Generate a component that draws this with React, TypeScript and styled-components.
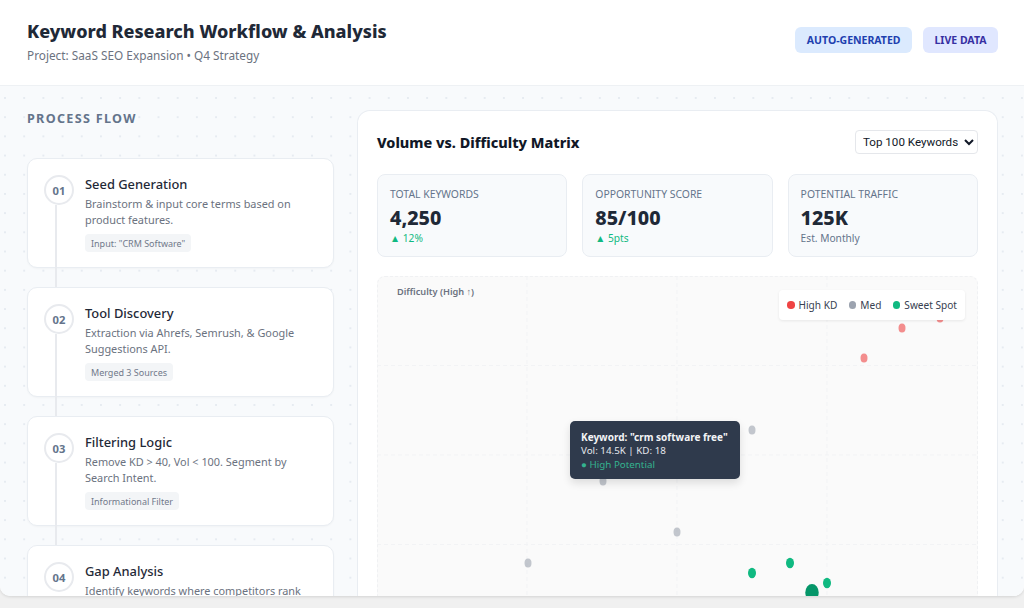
import React from 'react';
import styled, { createGlobalStyle } from 'styled-components';

const Global = createGlobalStyle`
  html, body { margin: 0; padding: 0; height: 608px; background: #f0f0f0; overflow: hidden; }
  * { box-sizing: border-box; }
  body { font-family: "Noto Sans", "Open Sans", sans-serif; }
`;

const Slide = styled.div`
  width: 1024px; height: 596px; background: #ffffff; display: flex; flex-direction: column;
  overflow: hidden; border-radius: 0 0 10px 10px; box-shadow: 0 1px 3px rgba(0,0,0,.12);
`;
const Header = styled.header`
  height: 86px; flex: none; display: flex; justify-content: space-between; align-items: flex-start;
  padding: 19px 26px 0 27px; border-bottom: 1px solid #eef1f4; background: #fff;
`;
const TitleBlock = styled.div`display: flex; flex-direction: column;`;
const Title = styled.h1`
  margin: 0; font-size: 18px; line-height: 24px; font-weight: 800; color: #1f2937;
`;
const Subtitle = styled.p`
  margin: 4px 0 0; font-size: 11.8px; line-height: 16px; color: #6b7280;
`;
const Badges = styled.div`display: flex; gap: 11px; margin-top: 8px;`;
const Badge = styled.span<{ $bg: string; $fg: string }>`
  height: 26px; padding: 0 11.5px; display: flex; align-items: center; border-radius: 6px;
  font-size: 10.5px; font-weight: 700; background: ${p => p.$bg}; color: ${p => p.$fg};
`;
const Main = styled.main`
  flex: 1; min-height: 0; display: flex; background-color: #f8fafc;
  background-image: radial-gradient(#e6ebf1 0.8px, transparent 0.9px);
  background-size: 19.2px 19.2px; background-position: -4.6px 2.4px;
`;
const Flow = styled.section`
  width: 357px; flex: none; padding: 24px 23px 0 27px; overflow: hidden;
`;
const FlowTitle = styled.h2`
  margin: 0 0 31px; font-size: 12.6px; line-height: 17px; font-weight: 700; letter-spacing: 1.3px; color: #64748b;
`;
const Steps = styled.div`display: flex; flex-direction: column; gap: 19.5px;`;
const Step = styled.article`
  position: relative; height: 109.5px; display: flex; gap: 11px; padding: 16px 16px 0 16px;
  background: #fff; border: 1px solid #e9edf2; border-radius: 10px; box-shadow: 0 1px 2px rgba(0,0,0,.03);
`;
const Connector = styled.span`
  position: absolute; left: 27px; top: 46px; width: 2px; height: 92px; background: #e8eaee;
`;
const Circle = styled.div`
  position: relative; z-index: 1; width: 30px; height: 30px; flex: none; border-radius: 50%; background: #fff;
  border: 2px solid #e8eaee; display: flex; align-items: center; justify-content: center;
  font-size: 11.2px; font-weight: 700; color: #64748b;
`;
const StepBody = styled.div`display: flex; flex-direction: column; align-items: flex-start; min-width: 0;`;
const StepTitle = styled.h3`
  margin: -0.5px 0 0; font-size: 12.9px; line-height: 18px; font-weight: 500; color: #1f2937;
`;
const StepText = styled.p`
  margin: 3.5px 0 0; font-size: 10.9px; line-height: 16px; color: #6b7280;
`;
const Tag = styled.span`
  margin-top: 6px; height: 18px; padding: 0 6px; display: flex; align-items: center; border-radius: 4px;
  background: #f3f5f7; font-size: 9px; color: #71798a;
`;
const Panel = styled.section`
  width: 641px; flex: none; background: #fff; border: 1px solid #e9edf2; border-bottom: none;
  border-radius: 13px 13px 0 0; margin-top: 24px; padding: 19px 19px 0; overflow: hidden;
`;
const PanelHead = styled.div`display: flex; justify-content: space-between; align-items: center; height: 24px;`;
const PanelTitle = styled.h2`margin: 0; font-size: 14.4px; line-height: 23px; font-weight: 800; color: #111827;`;
const Select = styled.select`
  width: 123px; height: 24px; padding: 0 3px; background: #fff; border: 1px solid #e5e7eb; border-radius: 4px;
  font-family: Roboto, "Liberation Sans", sans-serif; font-size: 11.6px; color: #111827;
`;
const Stats = styled.div`
  display: grid; grid-template-columns: 190.3px 190.3px 190.4px; gap: 15px; margin-top: 20px;
`;
const Stat = styled.div`
  height: 83px; padding: 12px 12px 0; background: #f8fafc; border: 1px solid #e9edf2; border-radius: 8px;
`;
const StatLabel = styled.div`font-size: 10.4px; line-height: 14px; color: #64748b;`;
const StatValue = styled.div`margin-top: 4px; font-size: 19.7px; line-height: 25px; font-weight: 800; color: #1f2937;`;
const StatNote = styled.div<{ $up?: boolean }>`
  margin-top: 1px; font-size: 10.2px; line-height: 14px; color: ${p => (p.$up ? '#10b981' : '#64748b')};
`;
const Chart = styled.div`
  position: relative; width: 601px; height: 360px; margin-top: 19px; background: #fafafa;
  border: 1px dashed #f0f1f3; border-bottom: none; border-radius: 8px 8px 0 0;
`;
const Plot = styled.svg`position: absolute; left: -1px; top: -1px; width: 601px; height: 360px;`;
const AxisLabel = styled.span`
  position: absolute; left: 19px; top: 9px; font-size: 9.2px; line-height: 12px; font-weight: 600; color: #6b7280;
`;
const Legend = styled.div`
  position: absolute; right: 12px; top: 13px; height: 30px; padding: 0 8px; display: flex; align-items: center; gap: 11.5px;
  background: #fff; border-radius: 4px; box-shadow: 0 1px 3px rgba(0,0,0,.08);
  font-size: 10.1px; color: #374151;
`;
const LegendItem = styled.span`display: flex; align-items: center; gap: 4px;`;
const Swatch = styled.i<{ $c: string }>`width: 7.5px; height: 7.5px; border-radius: 50%; background: ${p => p.$c};`;
const Tooltip = styled.div`
  position: absolute; left: 192px; top: 144px; width: 170px; height: 58px; padding: 9px 0 9px 11px;
  background: #2f3a4c; border-radius: 5px; box-shadow: 0 4px 8px rgba(0,0,0,.12);
  font-size: 9.8px; line-height: 14.2px; color: #e5e7eb; white-space: nowrap;
`;
const TipHead = styled.div`font-size: 10px; font-weight: 700; color: #f3f4f6;`;
const TipGood = styled.div`color: #34b38f;`;

const steps = [
  { n: '01', t: 'Seed Generation', d: 'Brainstorm & input core terms based on product features.', g: 'Input: "CRM Software"' },
  { n: '02', t: 'Tool Discovery', d: 'Extraction via Ahrefs, Semrush, & Google Suggestions API.', g: 'Merged 3 Sources' },
  { n: '03', t: 'Filtering Logic', d: 'Remove KD > 40, Vol < 100. Segment by Search Intent.', g: 'Informational Filter' },
  { n: '04', t: 'Gap Analysis', d: 'Identify keywords where competitors rank but we do not appear yet.', g: 'Content Gaps' },
];
const vLines = [150, 300, 450];
const hLines = [89.5, 179, 268.5];
const dots: [number, number, number, number, string, number][] = [
  [487, 82, 3.5, 4.5, '#ef4444', 0.6], [525, 52, 3.5, 4.5, '#ef4444', 0.6], [563, 42, 3.5, 4.5, '#ef4444', 0.6],
  [375, 154, 3.5, 4.5, '#9ca3af', 0.6], [226, 205, 3.5, 4.5, '#9ca3af', 0.6], [300, 256, 3.5, 4.5, '#9ca3af', 0.6], [151, 287, 3.5, 4.5, '#9ca3af', 0.6],
  [375, 297, 4, 5.2, '#10b981', 1], [413, 287, 4, 5.2, '#10b981', 1], [450, 307, 4, 5.2, '#10b981', 1], [435, 316.5, 6.7, 8.5, '#059669', 1],
];

export default function App() {
  return (
    <>
      <Global />
      <Slide>
        <Header>
          <TitleBlock>
            <Title>Keyword Research Workflow &amp; Analysis</Title>
            <Subtitle>Project: SaaS SEO Expansion • Q4 Strategy</Subtitle>
          </TitleBlock>
          <Badges>
            <Badge $bg="#dbeafe" $fg="#1e40af">AUTO-GENERATED</Badge>
            <Badge $bg="#e0e7ff" $fg="#3730a3">LIVE DATA</Badge>
          </Badges>
        </Header>
        <Main>
          <Flow>
            <FlowTitle>PROCESS FLOW</FlowTitle>
            <Steps>
              {steps.map((s, i) => (
                <Step key={s.n}>
                  {i < 3 && <Connector />}
                  <Circle>{s.n}</Circle>
                  <StepBody>
                    <StepTitle>{s.t}</StepTitle>
                    <StepText>{s.d}</StepText>
                    <Tag>{s.g}</Tag>
                  </StepBody>
                </Step>
              ))}
            </Steps>
          </Flow>
          <Panel>
            <PanelHead>
              <PanelTitle>Volume vs. Difficulty Matrix</PanelTitle>
              <Select defaultValue="100"><option value="100">Top 100 Keywords</option></Select>
            </PanelHead>
            <Stats>
              <Stat><StatLabel>TOTAL KEYWORDS</StatLabel><StatValue>4,250</StatValue><StatNote $up>▲ 12%</StatNote></Stat>
              <Stat><StatLabel>OPPORTUNITY SCORE</StatLabel><StatValue>85/100</StatValue><StatNote $up>▲ 5pts</StatNote></Stat>
              <Stat><StatLabel>POTENTIAL TRAFFIC</StatLabel><StatValue>125K</StatValue><StatNote>Est. Monthly</StatNote></Stat>
            </Stats>
            <Chart>
              <Plot viewBox="0 0 601 360">
                {vLines.map(x => <line key={x} x1={x} y1={0} x2={x} y2={360} stroke="#f2f3f5" strokeDasharray="4 3" />)}
                {hLines.map(y => <line key={y} x1={0} y1={y} x2={601} y2={y} stroke="#f2f3f5" strokeDasharray="4 3" />)}
                {dots.map(([x, y, rx, ry, c, o]) => <ellipse key={`${x}-${y}`} cx={x} cy={y} rx={rx} ry={ry} fill={c} opacity={o} />)}
              </Plot>
              <AxisLabel>Difficulty (High ↑)</AxisLabel>
              <Legend>
                <LegendItem><Swatch $c="#ef4444" />High KD</LegendItem>
                <LegendItem><Swatch $c="#9ca3af" />Med</LegendItem>
                <LegendItem><Swatch $c="#10b981" />Sweet Spot</LegendItem>
              </Legend>
              <Tooltip>
                <TipHead>Keyword: "crm software free"</TipHead>
                <div>Vol: 14.5K | KD: 18</div>
                <TipGood>● High Potential</TipGood>
              </Tooltip>
            </Chart>
          </Panel>
        </Main>
      </Slide>
    </>
  );
}
